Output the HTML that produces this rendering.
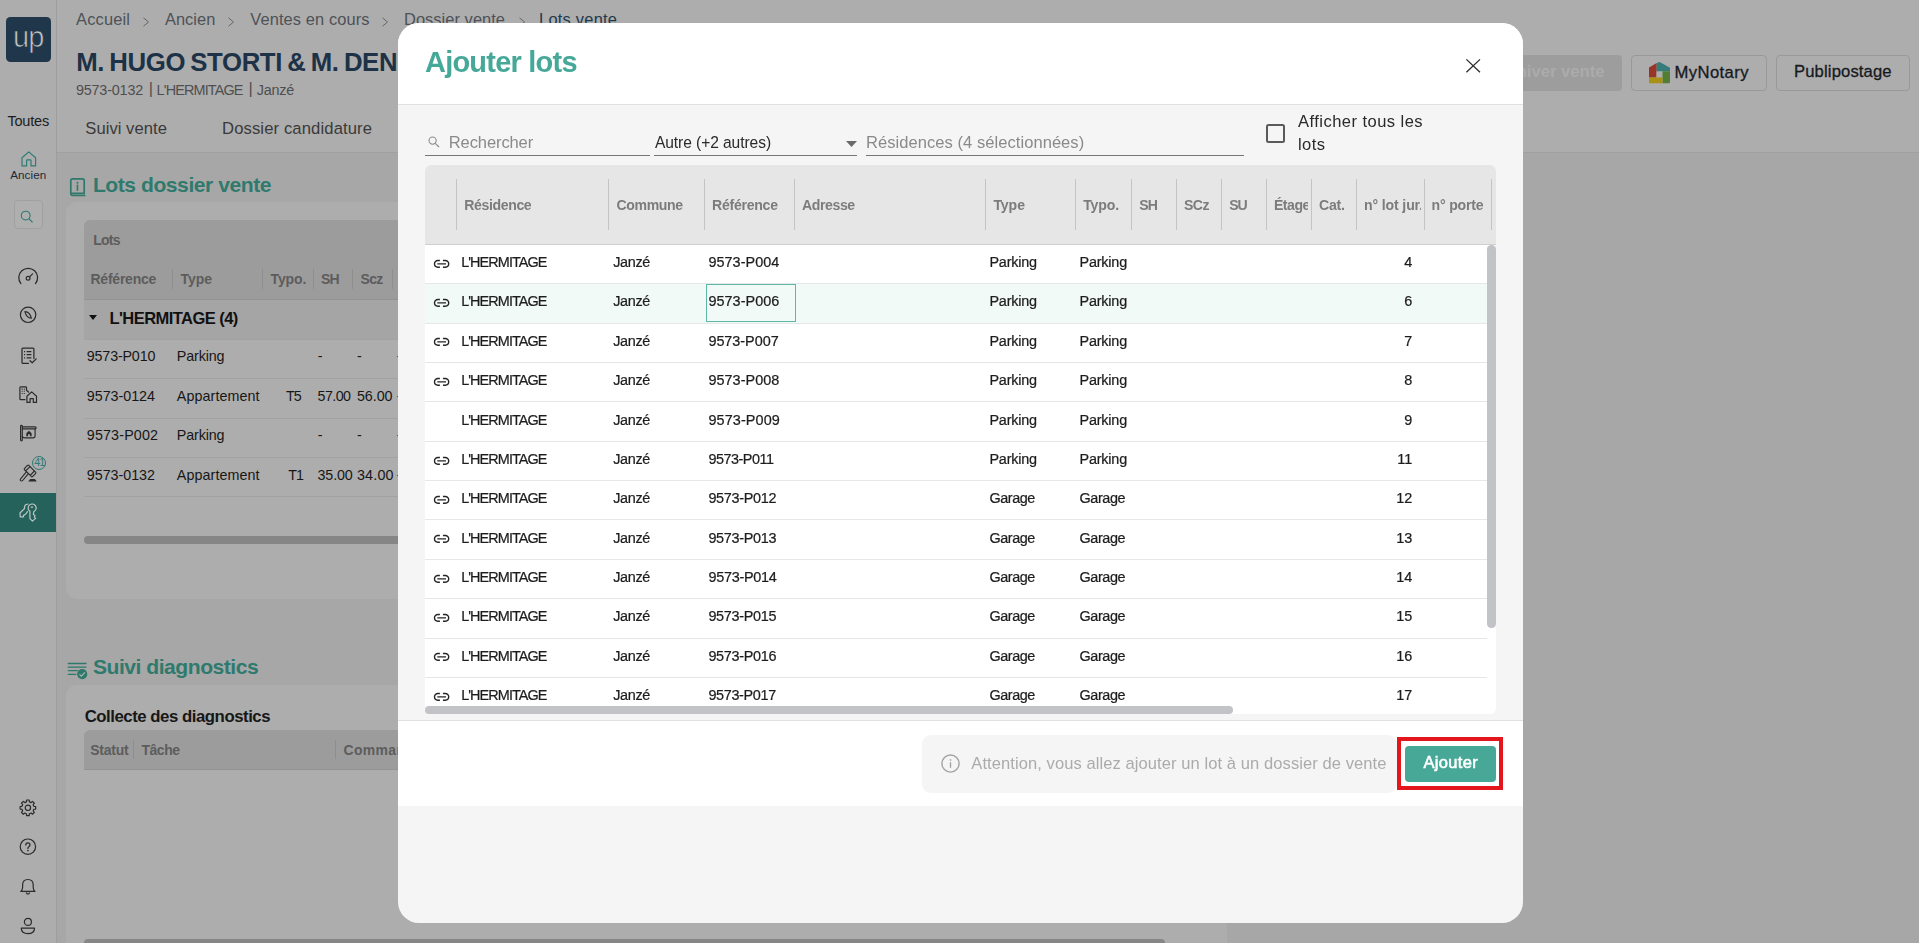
<!DOCTYPE html>
<html lang="fr"><head><meta charset="utf-8"><title>Ajouter lots</title>
<style>
html,body{margin:0;padding:0}
body{width:1919px;height:943px;overflow:hidden;position:relative;background:#a7a7a7;font-family:"Liberation Sans", sans-serif;}
.b{position:absolute;box-sizing:border-box}
.t{position:absolute;white-space:nowrap;line-height:normal;font-family:"Liberation Sans", sans-serif;}
svg{position:absolute;overflow:visible}
</style></head>
<body>
<div class="b" style="left:57px;top:0px;width:1862px;height:152px;background:#adadad;"></div>
<div class="b" style="left:57px;top:152px;width:1862px;height:1px;background:#a0a0a0;"></div>
<div class="b" style="left:0px;top:0px;width:56px;height:943px;background:#adadad;"></div>
<div class="b" style="left:56px;top:0px;width:1px;height:943px;background:#9e9e9e;"></div>
<div class="b" style="left:6.2px;top:17px;width:44.7px;height:44.5px;background:#20374b;border-radius:4.5px;"></div>
<span class="t" style="font-size:29px;font-weight:400;color:#bfc3c6;letter-spacing:-1.000px;left:13.1px;top:20.90px;-webkit-text-stroke:0.7px #20374b;">up</span>
<span class="t" style="font-size:16.43px;font-weight:400;color:#4e5257;letter-spacing:0.174px;left:76px;top:10.00px;">Accueil</span>
<span class="t" style="font-size:16.43px;font-weight:400;color:#4e5257;letter-spacing:0.016px;left:165px;top:10.00px;">Ancien</span>
<span class="t" style="font-size:16.43px;font-weight:400;color:#4e5257;letter-spacing:0.101px;left:250.3px;top:10.00px;">Ventes en cours</span>
<span class="t" style="font-size:16.43px;font-weight:400;color:#4e5257;letter-spacing:0.049px;left:404px;top:10.00px;">Dossier vente</span>
<span class="t" style="font-size:16.43px;font-weight:400;color:#22384c;letter-spacing:0.247px;left:539px;top:10.00px;">Lots vente</span>
<svg style="left:141.5px;top:16.5px" width="8" height="10" viewBox="0 0 8 10"><path d="M1.5 0.8 L6.5 5 L1.5 9.2" fill="none" stroke="#62676c" stroke-width="1"/></svg>
<svg style="left:227px;top:16.5px" width="8" height="10" viewBox="0 0 8 10"><path d="M1.5 0.8 L6.5 5 L1.5 9.2" fill="none" stroke="#62676c" stroke-width="1"/></svg>
<svg style="left:381px;top:16.5px" width="8" height="10" viewBox="0 0 8 10"><path d="M1.5 0.8 L6.5 5 L1.5 9.2" fill="none" stroke="#62676c" stroke-width="1"/></svg>
<svg style="left:517.5px;top:16.5px" width="8" height="10" viewBox="0 0 8 10"><path d="M1.5 0.8 L6.5 5 L1.5 9.2" fill="none" stroke="#62676c" stroke-width="1"/></svg>
<span class="t" style="font-size:25.76px;font-weight:700;color:#1d3246;letter-spacing:-0.379px;left:76.2px;top:47.60px;word-spacing:-1.5px;">M. HUGO STORTI &amp; M. DENIS</span>
<span class="t" style="font-size:14.42px;font-weight:400;color:#4f4f4f;letter-spacing:-0.188px;left:75.9px;top:82.00px;">9573-0132</span>
<span class="t" style="font-size:16.43px;font-weight:400;color:#4f4f4f;left:148.8px;top:79.20px;">|</span>
<span class="t" style="font-size:14.42px;font-weight:400;color:#4f4f4f;letter-spacing:-0.854px;left:156.6px;top:82.00px;">L&#x27;HERMITAGE</span>
<span class="t" style="font-size:16.43px;font-weight:400;color:#4f4f4f;left:248.4px;top:79.20px;">|</span>
<span class="t" style="font-size:14.42px;font-weight:400;color:#4f4f4f;letter-spacing:-0.238px;left:256.7px;top:82.00px;">Janzé</span>
<span class="t" style="font-size:16.64px;font-weight:400;color:#3a3a3a;letter-spacing:0.027px;left:85.3px;top:119.00px;">Suivi vente</span>
<span class="t" style="font-size:16.64px;font-weight:400;color:#3a3a3a;letter-spacing:0.119px;left:222px;top:119.00px;">Dossier candidature</span>
<div class="b" style="left:1500px;top:55px;width:122px;height:35.5px;background:#9d9d9d;border-radius:4px;"></div>
<span class="t" style="font-size:16.64px;font-weight:700;color:#ababab;right:314.50px;top:62.00px;">Archiver vente</span>
<div class="b" style="left:1631px;top:55px;width:136px;height:35.5px;border:1px solid #999;border-radius:4px;"></div>
<span class="t" style="font-size:16.64px;font-weight:400;color:#161a1f;letter-spacing:0.408px;left:1674.5px;top:63.00px;-webkit-text-stroke:0.3px #161a1f;">MyNotary</span>
<div class="b" style="left:1776px;top:55px;width:134px;height:35.5px;border:1px solid #999;border-radius:4px;"></div>
<span class="t" style="font-size:16.64px;font-weight:400;color:#161a1f;letter-spacing:0.133px;left:1794px;top:62.30px;-webkit-text-stroke:0.3px #161a1f;">Publipostage</span>
<svg style="left:1649px;top:61.8px" width="21" height="21.2" viewBox="0 0 21 21.2">
<path d="M0 5.6 L7.7 1.1 L7.7 9.2 L7.3 9.2 L7.3 15.4 L0 15.4 Z" fill="#983528"/>
<path d="M7.7 1.1 L9.9 0.15 Q10.5 -0.1 11.1 0.2 L21 5.7 L21 9.2 L7.7 9.2 Z" fill="#367c7b"/>
<path d="M13.5 9.2 L21 9.2 L21 19.9 Q21 21.2 19.7 21.2 L13.5 21.2 Z" fill="#527e34"/>
<path d="M0 15.4 L13.5 15.4 L13.5 21.2 L1.3 21.2 Q0 21.2 0 19.9 Z" fill="#a89116"/>
</svg>
<span class="t" style="font-size:14.52px;font-weight:400;color:#1c1c1c;letter-spacing:-0.196px;left:7.4px;top:113.20px;">Toutes</span>
<span class="t" style="font-size:11.66px;font-weight:400;color:#1c2a38;letter-spacing:0.072px;left:10.2px;top:168.00px;">Ancien</span>
<div class="b" style="left:14px;top:200px;width:29px;height:28.5px;background:#afafaf;border:1px solid #a0a0a0;border-radius:4px;"></div>
<div class="b" style="left:0px;top:493.4px;width:56px;height:38.4px;background:#25625c;"></div>
<span class="t" style="font-size:21.09px;font-weight:700;color:#2f7a6d;letter-spacing:-0.450px;left:92.9px;top:172.90px;">Lots dossier vente</span>
<div class="b" style="left:66px;top:202px;width:1160.5px;height:396.5px;background:#adadad;border-radius:11px;"></div>
<div class="b" style="left:84px;top:219.5px;width:1125px;height:80px;background:#9c9c9c;border-radius:6px 6px 0 0;"></div>
<div class="b" style="left:84px;top:299.3px;width:1125px;height:1px;background:#939393;"></div>
<div class="b" style="left:84px;top:300.3px;width:1125px;height:38.7px;background:#a5a5a5;"></div>
<span class="t" style="font-size:13.99px;font-weight:700;color:#5c5c5c;letter-spacing:-0.777px;left:93.3px;top:231.90px;">Lots</span>
<span class="t" style="font-size:13.99px;font-weight:700;color:#5c5c5c;letter-spacing:-0.230px;left:90.5px;top:270.90px;">Référence</span>
<span class="t" style="font-size:13.99px;font-weight:700;color:#5c5c5c;letter-spacing:-0.036px;left:180.5px;top:270.90px;">Type</span>
<span class="t" style="font-size:13.99px;font-weight:700;color:#5c5c5c;letter-spacing:-0.116px;left:270.5px;top:270.90px;">Typo.</span>
<span class="t" style="font-size:13.99px;font-weight:700;color:#5c5c5c;letter-spacing:-1.000px;left:321.1px;top:270.90px;">SH</span>
<span class="t" style="font-size:13.99px;font-weight:700;color:#5c5c5c;letter-spacing:-0.655px;left:360.5px;top:270.90px;">Scz</span>
<div class="b" style="left:172.0px;top:269.2px;width:1px;height:19.5px;background:#8e8e8e;"></div>
<div class="b" style="left:262.0px;top:269.2px;width:1px;height:19.5px;background:#8e8e8e;"></div>
<div class="b" style="left:313.2px;top:269.2px;width:1px;height:19.5px;background:#8e8e8e;"></div>
<div class="b" style="left:352.0px;top:269.2px;width:1px;height:19.5px;background:#8e8e8e;"></div>
<div class="b" style="left:392.1px;top:269.2px;width:1px;height:19.5px;background:#8e8e8e;"></div>
<svg style="left:89px;top:315.2px" width="8" height="5" viewBox="0 0 8 5"><path d="M0 0 L8 0 L4 5 Z" fill="#111"/></svg>
<span class="t" style="font-size:16.54px;font-weight:700;color:#111;letter-spacing:-0.557px;left:109.4px;top:308.80px;">L&#x27;HERMITAGE (4)</span>
<span class="t" style="font-size:14.31px;font-weight:400;color:#171717;letter-spacing:-0.171px;left:86.8px;top:348.00px;">9573-P010</span>
<span class="t" style="font-size:14.31px;font-weight:400;color:#171717;letter-spacing:-0.131px;left:176.8px;top:348.00px;">Parking</span>
<span class="t" style="font-size:14.31px;font-weight:400;color:#171717;left:317.8px;top:348.00px;">-</span>
<span class="t" style="font-size:14.31px;font-weight:400;color:#171717;left:357px;top:348.00px;">-</span>
<span class="t" style="font-size:14.31px;font-weight:400;color:#171717;left:396.8px;top:348.00px;">-</span>
<div class="b" style="left:84px;top:339.0px;width:1125px;height:1px;background:#a2a2a2;"></div>
<span class="t" style="font-size:14.31px;font-weight:400;color:#171717;letter-spacing:-0.022px;left:86.8px;top:388.00px;">9573-0124</span>
<span class="t" style="font-size:14.31px;font-weight:400;color:#171717;letter-spacing:0.094px;left:176.8px;top:388.00px;">Appartement</span>
<span class="t" style="font-size:14.31px;font-weight:400;color:#171717;letter-spacing:-1.000px;left:286px;top:388.00px;">T5</span>
<span class="t" style="font-size:14.31px;font-weight:400;color:#171717;letter-spacing:-0.570px;left:317.5px;top:388.00px;">57.00</span>
<span class="t" style="font-size:14.31px;font-weight:400;color:#171717;letter-spacing:-0.045px;left:356.9px;top:388.00px;">56.00</span>
<span class="t" style="font-size:14.31px;font-weight:400;color:#171717;left:396.8px;top:388.00px;">-</span>
<div class="b" style="left:84px;top:378.37px;width:1125px;height:1px;background:#a2a2a2;"></div>
<span class="t" style="font-size:14.31px;font-weight:400;color:#171717;letter-spacing:0.154px;left:86.8px;top:427.00px;">9573-P002</span>
<span class="t" style="font-size:14.31px;font-weight:400;color:#171717;letter-spacing:-0.131px;left:176.8px;top:427.00px;">Parking</span>
<span class="t" style="font-size:14.31px;font-weight:400;color:#171717;left:317.8px;top:427.00px;">-</span>
<span class="t" style="font-size:14.31px;font-weight:400;color:#171717;left:357px;top:427.00px;">-</span>
<span class="t" style="font-size:14.31px;font-weight:400;color:#171717;left:396.8px;top:427.00px;">-</span>
<div class="b" style="left:84px;top:417.74px;width:1125px;height:1px;background:#a2a2a2;"></div>
<span class="t" style="font-size:14.31px;font-weight:400;color:#171717;letter-spacing:-0.022px;left:86.8px;top:467.00px;">9573-0132</span>
<span class="t" style="font-size:14.31px;font-weight:400;color:#171717;letter-spacing:0.094px;left:176.8px;top:467.00px;">Appartement</span>
<span class="t" style="font-size:14.31px;font-weight:400;color:#171717;letter-spacing:-1.000px;left:288.3px;top:467.00px;">T1</span>
<span class="t" style="font-size:14.31px;font-weight:400;color:#171717;letter-spacing:-0.120px;left:317.5px;top:467.00px;">35.00</span>
<span class="t" style="font-size:14.31px;font-weight:400;color:#171717;letter-spacing:0.205px;left:356.9px;top:467.00px;">34.00</span>
<span class="t" style="font-size:14.31px;font-weight:400;color:#171717;left:396.8px;top:467.00px;">-</span>
<div class="b" style="left:84px;top:457.11px;width:1125px;height:1px;background:#a2a2a2;"></div>
<div class="b" style="left:84px;top:496.48px;width:1125px;height:1px;background:#a2a2a2;"></div>
<div class="b" style="left:84px;top:536.4px;width:1000px;height:8px;background:#868686;border-radius:4px;"></div>
<span class="t" style="font-size:21.09px;font-weight:700;color:#2f7a6d;letter-spacing:-0.472px;left:92.9px;top:655.00px;">Suivi diagnostics</span>
<div class="b" style="left:66px;top:684.7px;width:1160.5px;height:300px;background:#adadad;border-radius:11px;"></div>
<span class="t" style="font-size:16.75px;font-weight:700;color:#171717;letter-spacing:-0.461px;left:84.7px;top:707.20px;">Collecte des diagnostics</span>
<div class="b" style="left:84px;top:729.8px;width:1125px;height:39.2px;background:#9c9c9c;border-radius:6px 6px 0 0;"></div>
<div class="b" style="left:84px;top:768.5px;width:1125px;height:1px;background:#939393;"></div>
<span class="t" style="font-size:13.99px;font-weight:700;color:#5c5c5c;letter-spacing:-0.225px;left:90.2px;top:742.40px;">Statut</span>
<span class="t" style="font-size:13.99px;font-weight:700;color:#5c5c5c;letter-spacing:-0.480px;left:141.5px;top:742.40px;">Tâche</span>
<span class="t" style="font-size:13.99px;font-weight:700;color:#5c5c5c;left:343.6px;top:742.40px;letter-spacing:0.3px;">Commande</span>
<div class="b" style="left:133.0px;top:740px;width:1px;height:18.5px;background:#8e8e8e;"></div>
<div class="b" style="left:334.8px;top:740px;width:1px;height:18.5px;background:#8e8e8e;"></div>
<div class="b" style="left:84px;top:938.7px;width:1081px;height:8px;background:#868686;border-radius:4px;"></div>
<svg style="left:21px;top:150.5px" width="16" height="16" viewBox="0 0 16 16"><path d="M1 6.7 L7.8 0.9 L14.6 6.7 L14.6 14.9 L10 14.9 L10 9.6 Q10 8.9 9.3 8.9 L6.3 8.9 Q5.6 8.9 5.6 9.6 L5.6 14.9 L1 14.9 Z" fill="none" stroke="#2b7a74" stroke-width="1.15" stroke-linejoin="round"/></svg>
<svg style="left:20px;top:210px" width="14" height="14" viewBox="0 0 14 14"><circle cx="5.7" cy="5.6" r="4.4" fill="none" stroke="#2b7a74" stroke-width="1.1"/><path d="M9 8.9 L12.2 12" stroke="#2b7a74" stroke-width="1.1" stroke-linecap="round"/></svg>
<svg style="left:17px;top:266px" width="22" height="20" viewBox="0 0 22 20"><path d="M3.9 17.6 A9.4 9.4 0 1 1 18.5 17.6" fill="none" stroke="#2b2b2b" stroke-width="1.25" stroke-linecap="round"/><circle cx="11.1" cy="12.3" r="1.9" fill="none" stroke="#2b2b2b" stroke-width="1.2"/><path d="M12.5 10.9 L15.6 7.9" stroke="#2b2b2b" stroke-width="1.25" stroke-linecap="round"/></svg>
<svg style="left:19px;top:306px" width="18" height="18" viewBox="0 0 18 18"><circle cx="9.1" cy="8.8" r="7.7" fill="none" stroke="#2b2b2b" stroke-width="1.2"/><path d="M5.9 5.6 Q10.5 5.4 12.4 12.1 Q7.6 12.2 5.9 5.6 Z" fill="none" stroke="#2b2b2b" stroke-width="1.1" stroke-linejoin="round"/></svg>
<svg style="left:21px;top:346.5px" width="17" height="18" viewBox="0 0 17 18"><path d="M12.9 11.5 L12.9 1.9 Q12.9 1 12 1 L1.9 1 Q1 1 1 1.9 L1 15.4 Q1 16.3 1.9 16.3 L7.5 16.3" fill="none" stroke="#2b2b2b" stroke-width="1.25" stroke-linecap="round"/><path d="M5.6 4.6 H10.4 M5.6 7.7 H10.4 M5.6 10.8 H10.4" stroke="#2b2b2b" stroke-width="1.2"/><path d="M3 4.6 H4.1 M3 7.7 H4.1 M3 10.8 H4.1" stroke="#2b2b2b" stroke-width="1.2"/><path d="M9 13.7 L11.2 15.8 L15.2 11.9" fill="none" stroke="#2b2b2b" stroke-width="1.25" stroke-linecap="round" stroke-linejoin="round"/></svg>
<svg style="left:19px;top:385.5px" width="19" height="18" viewBox="0 0 19 18"><path d="M6 13.6 L1.6 13.6 Q0.9 13.6 0.9 12.9 L0.9 1.6 Q0.9 0.9 1.6 0.9 L6.8 0.9 Q7.5 0.9 7.5 1.6 L7.5 4.2 L9.6 6" fill="none" stroke="#2b2b2b" stroke-width="1.2" stroke-linecap="round" stroke-linejoin="round"/><path d="M2.7 3.1 h1 M4.8 3.1 h1 M2.7 5.3 h1 M4.8 5.3 h1 M2.7 7.5 h1 M4.8 7.5 h1" stroke="#2b2b2b" stroke-width="1.1"/><path d="M7.9 16.4 L7.9 10.2 L12.7 5.9 L17.5 10.2 L17.5 16.4 L14.3 16.4 L14.3 12.6 L11.1 12.6 L11.1 16.4 Z" fill="none" stroke="#2b2b2b" stroke-width="1.2" stroke-linejoin="round"/></svg>
<svg style="left:19px;top:424px" width="19" height="19" viewBox="0 0 19 19"><g fill="none" stroke="#2b2b2b" stroke-width="1.15" stroke-linejoin="round" stroke-linecap="round"><rect x="1.6" y="1.4" width="1.7" height="15.5" rx="0.85"/><path d="M3.3 2.9 H16.3 Q17.1 2.9 17.1 3.85 Q17.1 4.8 16.3 4.8 H3.3"/><path d="M16.1 4.8 V11.7 Q16.1 13.9 13.9 13.9 H5.8 Q3.9 13.9 3.4 12.4"/></g><path d="M7.3 12.3 V9.2 L9.95 6.8 L12.6 9.2 V12.3 H10.9 V10.3 H9 V12.3 Z" fill="#2b2b2b"/></svg>
<svg style="left:19px;top:464px" width="19" height="19" viewBox="0 0 19 19"><g fill="#adadad" stroke="#2b2b2b" stroke-width="1.15" stroke-linejoin="round"><rect x="-0.3" y="10.95" width="11.4" height="2.7" rx="1.35" transform="rotate(-50 5.4 12.3)"/><g transform="rotate(45 11.07 6.96)"><rect x="5.3" y="3.9" width="11.5" height="6.1" rx="1"/><path d="M7.9 3.9 V10 M14.2 3.9 V10" fill="none"/></g></g><path d="M11.3 15 L15.8 15 L17.8 17.6 L9.2 17.6 Z" fill="#2b2b2b"/></svg>
<div class="b" style="left:31.8px;top:455.6px;width:14.4px;height:14.4px;border:1.1px solid #2b7a74;border-radius:50%;background:#adadad;"></div>
<span class="t" style="font-size:10.81px;font-weight:400;color:#2b7a74;letter-spacing:-1.000px;left:34.2px;top:456.30px;">41</span>
<svg style="left:19px;top:503px" width="19" height="20" viewBox="0 0 19 20"><g fill="none" stroke="#bcc4c2" stroke-width="1.2" stroke-linejoin="round" stroke-linecap="round"><path d="M9 1 Q5.6 1.4 5.5 4 L5.5 5.5 L1 10 L1.2 13.8 L4.5 13.8 L4.5 12.3 L6 11.6 L7.2 10.5 L8.4 8.6"/><path d="M10.9 8.3 A4 4 0 1 1 14.7 8.7 L14.4 11.6 L16 12.5 L15.4 14.1 L16.6 15.4 L13.45 18.1 L10.9 15.6 Z"/><path d="M12.3 4.2 H13.6"/></g></svg>
<svg style="left:19px;top:799px" width="18" height="18" viewBox="0 0 18 18"><path d="M7.60 1.01 L10.20 1.01 L10.37 2.88 L12.05 3.57 L13.49 2.37 L15.33 4.21 L14.13 5.65 L14.82 7.33 L16.69 7.50 L16.69 10.10 L14.82 10.27 L14.13 11.95 L15.33 13.39 L13.49 15.23 L12.05 14.03 L10.37 14.72 L10.20 16.59 L7.60 16.59 L7.43 14.72 L5.75 14.03 L4.31 15.23 L2.47 13.39 L3.67 11.95 L2.98 10.27 L1.11 10.10 L1.11 7.50 L2.98 7.33 L3.67 5.65 L2.47 4.21 L4.31 2.37 L5.75 3.57 L7.43 2.88 Z" fill="none" stroke="#2b2b2b" stroke-width="1.2" stroke-linejoin="round"/><circle cx="8.9" cy="8.8" r="2.7" fill="none" stroke="#2b2b2b" stroke-width="1.2"/></svg>
<svg style="left:19px;top:838px" width="18" height="18" viewBox="0 0 18 18"><circle cx="8.9" cy="8.7" r="7.7" fill="none" stroke="#2b2b2b" stroke-width="1.2"/><path d="M6.8 7.0 Q6.9 4.9 8.9 4.9 Q11 4.9 11 6.8 Q11 8 9.8 8.7 Q8.9 9.3 8.9 10.4" fill="none" stroke="#2b2b2b" stroke-width="1.25" stroke-linecap="round"/><circle cx="8.9" cy="12.5" r="0.85" fill="#2b2b2b"/></svg>
<svg style="left:19px;top:877.5px" width="18" height="18" viewBox="0 0 18 18"><path d="M1.8 13.4 Q3.6 12 3.6 9.6 L3.6 7.1 Q3.6 1.5 8.9 1.5 Q14.2 1.5 14.2 7.1 L14.2 9.6 Q14.2 12 16 13.4 Z" fill="none" stroke="#2b2b2b" stroke-width="1.2" stroke-linejoin="round"/><path d="M7.3 14.9 Q8.9 17.2 10.5 14.9" fill="none" stroke="#2b2b2b" stroke-width="1.2" stroke-linecap="round"/></svg>
<svg style="left:19px;top:916px" width="18" height="19" viewBox="0 0 18 19"><circle cx="8.9" cy="5.9" r="3.5" fill="none" stroke="#2b2b2b" stroke-width="1.2"/><path d="M2.3 12.2 L15.5 12.2 Q15.5 17.6 8.9 17.6 Q2.3 17.6 2.3 12.2 Z" fill="none" stroke="#2b2b2b" stroke-width="1.2" stroke-linejoin="round"/></svg>
<svg style="left:69px;top:177px" width="18" height="20" viewBox="0 0 18 20"><path d="M15.2 16.4 L15.2 3.6 Q15.2 1.8 13.4 1.8 L3.6 1.8 Q1.8 1.8 1.8 3.6 L1.8 16.6 Q1.8 18.5 3.8 18.5 L15.8 18.5 M1.9 16.4 L15.2 16.4" fill="none" stroke="#2f786b" stroke-width="1.7" stroke-linejoin="round" stroke-linecap="round"/><circle cx="8.45" cy="5.7" r="1.05" fill="#2f786b"/><path d="M8.45 8.3 V13.2" stroke="#2f786b" stroke-width="1.6" stroke-linecap="round"/></svg>
<svg style="left:67px;top:661px" width="22" height="20" viewBox="0 0 22 20"><path d="M1.3 2.5 H19 M1.3 6.2 H19 M1.3 9.6 H10.4 M1.3 13.4 H8.8" stroke="#2f786b" stroke-width="1.3" stroke-linecap="round"/><circle cx="15.2" cy="13.1" r="5.1" fill="#2f786b"/><path d="M12.5 13.3 L14.4 15.2 L17.9 11.4" fill="none" stroke="#a4b8b3" stroke-width="1.2"/></svg>
<div class="b" style="left:0;top:0;width:1919px;height:943px;will-change:transform;">
<div class="b" style="left:398px;top:23px;width:1125px;height:900px;background:#f5f5f5;border-radius:21px;overflow:hidden;"><div class="b" style="left:0;top:0;width:1125px;height:82px;background:#fff;border-bottom:1px solid #e0e0e0;"></div><div class="b" style="left:0;top:697px;width:1125px;height:85.5px;background:#fff;border-top:1px solid #e0e0e0;"></div></div>
<span class="t" style="font-size:28.94px;font-weight:700;color:#45a898;letter-spacing:-0.753px;left:425px;top:46.10px;">Ajouter lots</span>
<svg style="left:1466px;top:59.3px" width="14.4" height="13.6" viewBox="0 0 14.4 13.6"><path d="M0.4 0.4 L14 13.2 M14 0.4 L0.4 13.2" stroke="#2a2a2a" stroke-width="1.3" fill="none"/></svg>
<div class="b" style="left:425px;top:155px;width:224.5px;height:1px;background:#757575;"></div>
<div class="b" style="left:654px;top:155px;width:203px;height:1px;background:#757575;"></div>
<div class="b" style="left:866px;top:155px;width:378px;height:1px;background:#757575;"></div>
<svg style="left:428px;top:135.5px" width="12" height="12" viewBox="0 0 12 12"><circle cx="4.6" cy="4.6" r="3.6" fill="none" stroke="#8c8c8c" stroke-width="1.1"/><path d="M7.3 7.3 L11 11" stroke="#8c8c8c" stroke-width="1.2"/></svg>
<span class="t" style="font-size:16.54px;font-weight:400;color:#8a8a8a;letter-spacing:-0.117px;left:448.8px;top:133.20px;">Rechercher</span>
<span class="t" style="font-size:15.58px;font-weight:400;color:#2a2a2a;letter-spacing:-0.071px;left:654.9px;top:133.50px;">Autre (+2 autres)</span>
<svg style="left:845.5px;top:140.5px" width="11" height="6" viewBox="0 0 11 6"><path d="M0 0 L11 0 L5.5 6 Z" fill="#6a6a6a"/></svg>
<span class="t" style="font-size:16.54px;font-weight:400;color:#8a8a8a;letter-spacing:0.049px;left:866px;top:133.20px;">Résidences (4 sélectionnées)</span>
<div class="b" style="left:1265.6px;top:124.2px;width:19px;height:19px;border:2px solid #5a5a5a;border-radius:2.5px;"></div>
<span class="t" style="font-size:16.54px;font-weight:400;color:#2a2a2a;letter-spacing:0.455px;left:1298px;top:112.20px;">Afficher tous les</span>
<span class="t" style="font-size:16.54px;font-weight:400;color:#2a2a2a;letter-spacing:0.422px;left:1298px;top:135.00px;">lots</span>
<div class="b" style="left:425px;top:165px;width:1071px;height:549px;background:#fff;border-radius:6px;"></div>
<div class="b" style="left:425px;top:165px;width:1071px;height:79.3px;background:#e6e6e6;border-radius:6px 6px 0 0;"></div>
<div class="b" style="left:425px;top:244px;width:1071px;height:1px;background:#cfcfcf;"></div>
<div class="b" style="left:455.9px;top:179.3px;width:1px;height:50.3px;background:#c4c4c4;"></div>
<div class="b" style="left:608.1px;top:179.3px;width:1px;height:50.3px;background:#c4c4c4;"></div>
<div class="b" style="left:704.0px;top:179.3px;width:1px;height:50.3px;background:#c4c4c4;"></div>
<div class="b" style="left:793.9px;top:179.3px;width:1px;height:50.3px;background:#c4c4c4;"></div>
<div class="b" style="left:984.8px;top:179.3px;width:1px;height:50.3px;background:#c4c4c4;"></div>
<div class="b" style="left:1075.0px;top:179.3px;width:1px;height:50.3px;background:#c4c4c4;"></div>
<div class="b" style="left:1130.8px;top:179.3px;width:1px;height:50.3px;background:#c4c4c4;"></div>
<div class="b" style="left:1175.9px;top:179.3px;width:1px;height:50.3px;background:#c4c4c4;"></div>
<div class="b" style="left:1221.0px;top:179.3px;width:1px;height:50.3px;background:#c4c4c4;"></div>
<div class="b" style="left:1266.1px;top:179.3px;width:1px;height:50.3px;background:#c4c4c4;"></div>
<div class="b" style="left:1310.8px;top:179.3px;width:1px;height:50.3px;background:#c4c4c4;"></div>
<div class="b" style="left:1355.9px;top:179.3px;width:1px;height:50.3px;background:#c4c4c4;"></div>
<div class="b" style="left:1424.1px;top:179.3px;width:1px;height:50.3px;background:#c4c4c4;"></div>
<div class="b" style="left:1490.9px;top:179.3px;width:1px;height:50.3px;background:#c4c4c4;"></div>
<span class="t" style="font-size:14.1px;font-weight:700;color:#7c7c7c;letter-spacing:-0.389px;left:464.3px;top:197.00px;">Résidence</span>
<span class="t" style="font-size:14.1px;font-weight:700;color:#7c7c7c;letter-spacing:-0.387px;left:616.5px;top:197.00px;">Commune</span>
<span class="t" style="font-size:14.1px;font-weight:700;color:#7c7c7c;letter-spacing:-0.271px;left:712px;top:197.00px;">Référence</span>
<span class="t" style="font-size:14.1px;font-weight:700;color:#7c7c7c;letter-spacing:-0.404px;left:802px;top:197.00px;">Adresse</span>
<span class="t" style="font-size:14.1px;font-weight:700;color:#7c7c7c;letter-spacing:-0.086px;left:993.4px;top:197.00px;">Type</span>
<span class="t" style="font-size:14.1px;font-weight:700;color:#7c7c7c;letter-spacing:-0.137px;left:1083.2px;top:197.00px;">Typo.</span>
<span class="t" style="font-size:14.1px;font-weight:700;color:#7c7c7c;letter-spacing:-1.000px;left:1139.3px;top:197.00px;">SH</span>
<span class="t" style="font-size:14.1px;font-weight:700;color:#7c7c7c;letter-spacing:-0.570px;left:1184px;top:197.00px;">SCz</span>
<span class="t" style="font-size:14.1px;font-weight:700;color:#7c7c7c;letter-spacing:-1.000px;left:1229.2px;top:197.00px;">SU</span>
<span class="t" style="font-size:14.1px;font-weight:700;color:#7c7c7c;letter-spacing:-0.473px;left:1273.9px;top:197.00px;width:34.3px;overflow:hidden;">Étage</span>
<span class="t" style="font-size:14.1px;font-weight:700;color:#7c7c7c;letter-spacing:-0.214px;left:1319px;top:197.00px;">Cat.</span>
<span class="t" style="font-size:14.1px;font-weight:700;color:#7c7c7c;letter-spacing:-0.145px;left:1364.1px;top:197.00px;width:56.5px;overflow:hidden;">n° lot jur.</span>
<span class="t" style="font-size:14.1px;font-weight:700;color:#7c7c7c;letter-spacing:-0.187px;left:1431.6px;top:197.00px;">n° porte</span>
<div class="b" style="left:425px;top:283.6px;width:1062px;height:39.1px;background:#f2faf8;"></div>
<div class="b" style="left:706px;top:284px;width:90px;height:38px;border:1px solid #5fb8a7;"></div>
<div class="b" style="left:425px;top:283.27px;width:1062px;height:1px;background:#e7e7e7;"></div>
<svg style="left:433px;top:258.71px" width="18" height="10" viewBox="0 0 18 10"><path d="M6.9 1.45 H4.9 A3.4 3.4 0 0 0 4.9 8.25 H6.9 M9.96 1.45 H12.3 A3.4 3.4 0 0 1 12.3 8.25 H9.96 M4.3 4.85 H13" fill="none" stroke="#252525" stroke-width="1.4"/></svg>
<span class="t" style="font-size:14.42px;font-weight:400;color:#1d1d1d;letter-spacing:-0.914px;left:461.2px;top:254.10px;-webkit-text-stroke:0.22px #1d1d1d;">L&#x27;HERMITAGE</span>
<span class="t" style="font-size:14.42px;font-weight:400;color:#1d1d1d;letter-spacing:-0.313px;left:613.2px;top:254.10px;-webkit-text-stroke:0.22px #1d1d1d;">Janzé</span>
<span class="t" style="font-size:14.42px;font-weight:400;color:#1d1d1d;letter-spacing:0.062px;left:708.4px;top:254.10px;-webkit-text-stroke:0.22px #1d1d1d;">9573-P004</span>
<span class="t" style="font-size:14.42px;font-weight:400;color:#1d1d1d;letter-spacing:-0.193px;left:989.4px;top:254.10px;-webkit-text-stroke:0.22px #1d1d1d;">Parking</span>
<span class="t" style="font-size:14.42px;font-weight:400;color:#1d1d1d;letter-spacing:-0.193px;left:1079.5px;top:254.10px;-webkit-text-stroke:0.22px #1d1d1d;">Parking</span>
<span class="t" style="font-size:14.42px;font-weight:400;color:#1d1d1d;right:506.80px;top:254.10px;-webkit-text-stroke:0.22px #1d1d1d;">4</span>
<div class="b" style="left:425px;top:322.64px;width:1062px;height:1px;background:#e7e7e7;"></div>
<svg style="left:433px;top:298.08px" width="18" height="10" viewBox="0 0 18 10"><path d="M6.9 1.45 H4.9 A3.4 3.4 0 0 0 4.9 8.25 H6.9 M9.96 1.45 H12.3 A3.4 3.4 0 0 1 12.3 8.25 H9.96 M4.3 4.85 H13" fill="none" stroke="#252525" stroke-width="1.4"/></svg>
<span class="t" style="font-size:14.42px;font-weight:400;color:#1d1d1d;letter-spacing:-0.914px;left:461.2px;top:293.47px;-webkit-text-stroke:0.22px #1d1d1d;">L&#x27;HERMITAGE</span>
<span class="t" style="font-size:14.42px;font-weight:400;color:#1d1d1d;letter-spacing:-0.313px;left:613.2px;top:293.47px;-webkit-text-stroke:0.22px #1d1d1d;">Janzé</span>
<span class="t" style="font-size:14.42px;font-weight:400;color:#1d1d1d;letter-spacing:0.062px;left:708.4px;top:293.47px;-webkit-text-stroke:0.22px #1d1d1d;">9573-P006</span>
<span class="t" style="font-size:14.42px;font-weight:400;color:#1d1d1d;letter-spacing:-0.193px;left:989.4px;top:293.47px;-webkit-text-stroke:0.22px #1d1d1d;">Parking</span>
<span class="t" style="font-size:14.42px;font-weight:400;color:#1d1d1d;letter-spacing:-0.193px;left:1079.5px;top:293.47px;-webkit-text-stroke:0.22px #1d1d1d;">Parking</span>
<span class="t" style="font-size:14.42px;font-weight:400;color:#1d1d1d;right:506.80px;top:293.47px;-webkit-text-stroke:0.22px #1d1d1d;">6</span>
<div class="b" style="left:425px;top:362.01px;width:1062px;height:1px;background:#e7e7e7;"></div>
<svg style="left:433px;top:337.45px" width="18" height="10" viewBox="0 0 18 10"><path d="M6.9 1.45 H4.9 A3.4 3.4 0 0 0 4.9 8.25 H6.9 M9.96 1.45 H12.3 A3.4 3.4 0 0 1 12.3 8.25 H9.96 M4.3 4.85 H13" fill="none" stroke="#252525" stroke-width="1.4"/></svg>
<span class="t" style="font-size:14.42px;font-weight:400;color:#1d1d1d;letter-spacing:-0.914px;left:461.2px;top:332.84px;-webkit-text-stroke:0.22px #1d1d1d;">L&#x27;HERMITAGE</span>
<span class="t" style="font-size:14.42px;font-weight:400;color:#1d1d1d;letter-spacing:-0.313px;left:613.2px;top:332.84px;-webkit-text-stroke:0.22px #1d1d1d;">Janzé</span>
<span class="t" style="font-size:14.42px;font-weight:400;color:#1d1d1d;letter-spacing:-0.025px;left:708.4px;top:332.84px;-webkit-text-stroke:0.22px #1d1d1d;">9573-P007</span>
<span class="t" style="font-size:14.42px;font-weight:400;color:#1d1d1d;letter-spacing:-0.193px;left:989.4px;top:332.84px;-webkit-text-stroke:0.22px #1d1d1d;">Parking</span>
<span class="t" style="font-size:14.42px;font-weight:400;color:#1d1d1d;letter-spacing:-0.193px;left:1079.5px;top:332.84px;-webkit-text-stroke:0.22px #1d1d1d;">Parking</span>
<span class="t" style="font-size:14.42px;font-weight:400;color:#1d1d1d;right:506.80px;top:332.84px;-webkit-text-stroke:0.22px #1d1d1d;">7</span>
<div class="b" style="left:425px;top:401.38px;width:1062px;height:1px;background:#e7e7e7;"></div>
<svg style="left:433px;top:376.82px" width="18" height="10" viewBox="0 0 18 10"><path d="M6.9 1.45 H4.9 A3.4 3.4 0 0 0 4.9 8.25 H6.9 M9.96 1.45 H12.3 A3.4 3.4 0 0 1 12.3 8.25 H9.96 M4.3 4.85 H13" fill="none" stroke="#252525" stroke-width="1.4"/></svg>
<span class="t" style="font-size:14.42px;font-weight:400;color:#1d1d1d;letter-spacing:-0.914px;left:461.2px;top:372.21px;-webkit-text-stroke:0.22px #1d1d1d;">L&#x27;HERMITAGE</span>
<span class="t" style="font-size:14.42px;font-weight:400;color:#1d1d1d;letter-spacing:-0.313px;left:613.2px;top:372.21px;-webkit-text-stroke:0.22px #1d1d1d;">Janzé</span>
<span class="t" style="font-size:14.42px;font-weight:400;color:#1d1d1d;letter-spacing:0.062px;left:708.4px;top:372.21px;-webkit-text-stroke:0.22px #1d1d1d;">9573-P008</span>
<span class="t" style="font-size:14.42px;font-weight:400;color:#1d1d1d;letter-spacing:-0.193px;left:989.4px;top:372.21px;-webkit-text-stroke:0.22px #1d1d1d;">Parking</span>
<span class="t" style="font-size:14.42px;font-weight:400;color:#1d1d1d;letter-spacing:-0.193px;left:1079.5px;top:372.21px;-webkit-text-stroke:0.22px #1d1d1d;">Parking</span>
<span class="t" style="font-size:14.42px;font-weight:400;color:#1d1d1d;right:506.80px;top:372.21px;-webkit-text-stroke:0.22px #1d1d1d;">8</span>
<div class="b" style="left:425px;top:440.75px;width:1062px;height:1px;background:#e7e7e7;"></div>
<span class="t" style="font-size:14.42px;font-weight:400;color:#1d1d1d;letter-spacing:-0.914px;left:461.2px;top:411.58px;-webkit-text-stroke:0.22px #1d1d1d;">L&#x27;HERMITAGE</span>
<span class="t" style="font-size:14.42px;font-weight:400;color:#1d1d1d;letter-spacing:-0.313px;left:613.2px;top:411.58px;-webkit-text-stroke:0.22px #1d1d1d;">Janzé</span>
<span class="t" style="font-size:14.42px;font-weight:400;color:#1d1d1d;letter-spacing:0.113px;left:708.4px;top:411.58px;-webkit-text-stroke:0.22px #1d1d1d;">9573-P009</span>
<span class="t" style="font-size:14.42px;font-weight:400;color:#1d1d1d;letter-spacing:-0.193px;left:989.4px;top:411.58px;-webkit-text-stroke:0.22px #1d1d1d;">Parking</span>
<span class="t" style="font-size:14.42px;font-weight:400;color:#1d1d1d;letter-spacing:-0.193px;left:1079.5px;top:411.58px;-webkit-text-stroke:0.22px #1d1d1d;">Parking</span>
<span class="t" style="font-size:14.42px;font-weight:400;color:#1d1d1d;right:506.80px;top:411.58px;-webkit-text-stroke:0.22px #1d1d1d;">9</span>
<div class="b" style="left:425px;top:480.12px;width:1062px;height:1px;background:#e7e7e7;"></div>
<svg style="left:433px;top:455.56px" width="18" height="10" viewBox="0 0 18 10"><path d="M6.9 1.45 H4.9 A3.4 3.4 0 0 0 4.9 8.25 H6.9 M9.96 1.45 H12.3 A3.4 3.4 0 0 1 12.3 8.25 H9.96 M4.3 4.85 H13" fill="none" stroke="#252525" stroke-width="1.4"/></svg>
<span class="t" style="font-size:14.42px;font-weight:400;color:#1d1d1d;letter-spacing:-0.914px;left:461.2px;top:450.95px;-webkit-text-stroke:0.22px #1d1d1d;">L&#x27;HERMITAGE</span>
<span class="t" style="font-size:14.42px;font-weight:400;color:#1d1d1d;letter-spacing:-0.313px;left:613.2px;top:450.95px;-webkit-text-stroke:0.22px #1d1d1d;">Janzé</span>
<span class="t" style="font-size:14.42px;font-weight:400;color:#1d1d1d;letter-spacing:-0.478px;left:708.4px;top:450.95px;-webkit-text-stroke:0.22px #1d1d1d;">9573-P011</span>
<span class="t" style="font-size:14.42px;font-weight:400;color:#1d1d1d;letter-spacing:-0.193px;left:989.4px;top:450.95px;-webkit-text-stroke:0.22px #1d1d1d;">Parking</span>
<span class="t" style="font-size:14.42px;font-weight:400;color:#1d1d1d;letter-spacing:-0.193px;left:1079.5px;top:450.95px;-webkit-text-stroke:0.22px #1d1d1d;">Parking</span>
<span class="t" style="font-size:14.42px;font-weight:400;color:#1d1d1d;right:506.80px;top:450.95px;-webkit-text-stroke:0.22px #1d1d1d;">11</span>
<div class="b" style="left:425px;top:519.4899999999999px;width:1062px;height:1px;background:#e7e7e7;"></div>
<svg style="left:433px;top:494.93px" width="18" height="10" viewBox="0 0 18 10"><path d="M6.9 1.45 H4.9 A3.4 3.4 0 0 0 4.9 8.25 H6.9 M9.96 1.45 H12.3 A3.4 3.4 0 0 1 12.3 8.25 H9.96 M4.3 4.85 H13" fill="none" stroke="#252525" stroke-width="1.4"/></svg>
<span class="t" style="font-size:14.42px;font-weight:400;color:#1d1d1d;letter-spacing:-0.914px;left:461.2px;top:490.32px;-webkit-text-stroke:0.22px #1d1d1d;">L&#x27;HERMITAGE</span>
<span class="t" style="font-size:14.42px;font-weight:400;color:#1d1d1d;letter-spacing:-0.313px;left:613.2px;top:490.32px;-webkit-text-stroke:0.22px #1d1d1d;">Janzé</span>
<span class="t" style="font-size:14.42px;font-weight:400;color:#1d1d1d;letter-spacing:-0.300px;left:708.4px;top:490.32px;-webkit-text-stroke:0.22px #1d1d1d;">9573-P012</span>
<span class="t" style="font-size:14.42px;font-weight:400;color:#1d1d1d;letter-spacing:-0.412px;left:989.4px;top:490.32px;-webkit-text-stroke:0.22px #1d1d1d;">Garage</span>
<span class="t" style="font-size:14.42px;font-weight:400;color:#1d1d1d;letter-spacing:-0.412px;left:1079.5px;top:490.32px;-webkit-text-stroke:0.22px #1d1d1d;">Garage</span>
<span class="t" style="font-size:14.42px;font-weight:400;color:#1d1d1d;right:506.80px;top:490.32px;-webkit-text-stroke:0.22px #1d1d1d;">12</span>
<div class="b" style="left:425px;top:558.8599999999999px;width:1062px;height:1px;background:#e7e7e7;"></div>
<svg style="left:433px;top:534.30px" width="18" height="10" viewBox="0 0 18 10"><path d="M6.9 1.45 H4.9 A3.4 3.4 0 0 0 4.9 8.25 H6.9 M9.96 1.45 H12.3 A3.4 3.4 0 0 1 12.3 8.25 H9.96 M4.3 4.85 H13" fill="none" stroke="#252525" stroke-width="1.4"/></svg>
<span class="t" style="font-size:14.42px;font-weight:400;color:#1d1d1d;letter-spacing:-0.914px;left:461.2px;top:529.69px;-webkit-text-stroke:0.22px #1d1d1d;">L&#x27;HERMITAGE</span>
<span class="t" style="font-size:14.42px;font-weight:400;color:#1d1d1d;letter-spacing:-0.313px;left:613.2px;top:529.69px;-webkit-text-stroke:0.22px #1d1d1d;">Janzé</span>
<span class="t" style="font-size:14.42px;font-weight:400;color:#1d1d1d;letter-spacing:-0.300px;left:708.4px;top:529.69px;-webkit-text-stroke:0.22px #1d1d1d;">9573-P013</span>
<span class="t" style="font-size:14.42px;font-weight:400;color:#1d1d1d;letter-spacing:-0.412px;left:989.4px;top:529.69px;-webkit-text-stroke:0.22px #1d1d1d;">Garage</span>
<span class="t" style="font-size:14.42px;font-weight:400;color:#1d1d1d;letter-spacing:-0.412px;left:1079.5px;top:529.69px;-webkit-text-stroke:0.22px #1d1d1d;">Garage</span>
<span class="t" style="font-size:14.42px;font-weight:400;color:#1d1d1d;right:506.80px;top:529.69px;-webkit-text-stroke:0.22px #1d1d1d;">13</span>
<div class="b" style="left:425px;top:598.23px;width:1062px;height:1px;background:#e7e7e7;"></div>
<svg style="left:433px;top:573.67px" width="18" height="10" viewBox="0 0 18 10"><path d="M6.9 1.45 H4.9 A3.4 3.4 0 0 0 4.9 8.25 H6.9 M9.96 1.45 H12.3 A3.4 3.4 0 0 1 12.3 8.25 H9.96 M4.3 4.85 H13" fill="none" stroke="#252525" stroke-width="1.4"/></svg>
<span class="t" style="font-size:14.42px;font-weight:400;color:#1d1d1d;letter-spacing:-0.914px;left:461.2px;top:569.06px;-webkit-text-stroke:0.22px #1d1d1d;">L&#x27;HERMITAGE</span>
<span class="t" style="font-size:14.42px;font-weight:400;color:#1d1d1d;letter-spacing:-0.313px;left:613.2px;top:569.06px;-webkit-text-stroke:0.22px #1d1d1d;">Janzé</span>
<span class="t" style="font-size:14.42px;font-weight:400;color:#1d1d1d;letter-spacing:-0.250px;left:708.4px;top:569.06px;-webkit-text-stroke:0.22px #1d1d1d;">9573-P014</span>
<span class="t" style="font-size:14.42px;font-weight:400;color:#1d1d1d;letter-spacing:-0.412px;left:989.4px;top:569.06px;-webkit-text-stroke:0.22px #1d1d1d;">Garage</span>
<span class="t" style="font-size:14.42px;font-weight:400;color:#1d1d1d;letter-spacing:-0.412px;left:1079.5px;top:569.06px;-webkit-text-stroke:0.22px #1d1d1d;">Garage</span>
<span class="t" style="font-size:14.42px;font-weight:400;color:#1d1d1d;right:506.80px;top:569.06px;-webkit-text-stroke:0.22px #1d1d1d;">14</span>
<div class="b" style="left:425px;top:637.5999999999999px;width:1062px;height:1px;background:#e7e7e7;"></div>
<svg style="left:433px;top:613.04px" width="18" height="10" viewBox="0 0 18 10"><path d="M6.9 1.45 H4.9 A3.4 3.4 0 0 0 4.9 8.25 H6.9 M9.96 1.45 H12.3 A3.4 3.4 0 0 1 12.3 8.25 H9.96 M4.3 4.85 H13" fill="none" stroke="#252525" stroke-width="1.4"/></svg>
<span class="t" style="font-size:14.42px;font-weight:400;color:#1d1d1d;letter-spacing:-0.914px;left:461.2px;top:608.43px;-webkit-text-stroke:0.22px #1d1d1d;">L&#x27;HERMITAGE</span>
<span class="t" style="font-size:14.42px;font-weight:400;color:#1d1d1d;letter-spacing:-0.313px;left:613.2px;top:608.43px;-webkit-text-stroke:0.22px #1d1d1d;">Janzé</span>
<span class="t" style="font-size:14.42px;font-weight:400;color:#1d1d1d;letter-spacing:-0.300px;left:708.4px;top:608.43px;-webkit-text-stroke:0.22px #1d1d1d;">9573-P015</span>
<span class="t" style="font-size:14.42px;font-weight:400;color:#1d1d1d;letter-spacing:-0.412px;left:989.4px;top:608.43px;-webkit-text-stroke:0.22px #1d1d1d;">Garage</span>
<span class="t" style="font-size:14.42px;font-weight:400;color:#1d1d1d;letter-spacing:-0.412px;left:1079.5px;top:608.43px;-webkit-text-stroke:0.22px #1d1d1d;">Garage</span>
<span class="t" style="font-size:14.42px;font-weight:400;color:#1d1d1d;right:506.80px;top:608.43px;-webkit-text-stroke:0.22px #1d1d1d;">15</span>
<div class="b" style="left:425px;top:676.97px;width:1062px;height:1px;background:#e7e7e7;"></div>
<svg style="left:433px;top:652.41px" width="18" height="10" viewBox="0 0 18 10"><path d="M6.9 1.45 H4.9 A3.4 3.4 0 0 0 4.9 8.25 H6.9 M9.96 1.45 H12.3 A3.4 3.4 0 0 1 12.3 8.25 H9.96 M4.3 4.85 H13" fill="none" stroke="#252525" stroke-width="1.4"/></svg>
<span class="t" style="font-size:14.42px;font-weight:400;color:#1d1d1d;letter-spacing:-0.914px;left:461.2px;top:647.80px;-webkit-text-stroke:0.22px #1d1d1d;">L&#x27;HERMITAGE</span>
<span class="t" style="font-size:14.42px;font-weight:400;color:#1d1d1d;letter-spacing:-0.313px;left:613.2px;top:647.80px;-webkit-text-stroke:0.22px #1d1d1d;">Janzé</span>
<span class="t" style="font-size:14.42px;font-weight:400;color:#1d1d1d;letter-spacing:-0.300px;left:708.4px;top:647.80px;-webkit-text-stroke:0.22px #1d1d1d;">9573-P016</span>
<span class="t" style="font-size:14.42px;font-weight:400;color:#1d1d1d;letter-spacing:-0.412px;left:989.4px;top:647.80px;-webkit-text-stroke:0.22px #1d1d1d;">Garage</span>
<span class="t" style="font-size:14.42px;font-weight:400;color:#1d1d1d;letter-spacing:-0.412px;left:1079.5px;top:647.80px;-webkit-text-stroke:0.22px #1d1d1d;">Garage</span>
<span class="t" style="font-size:14.42px;font-weight:400;color:#1d1d1d;right:506.80px;top:647.80px;-webkit-text-stroke:0.22px #1d1d1d;">16</span>
<svg style="left:433px;top:691.78px" width="18" height="10" viewBox="0 0 18 10"><path d="M6.9 1.45 H4.9 A3.4 3.4 0 0 0 4.9 8.25 H6.9 M9.96 1.45 H12.3 A3.4 3.4 0 0 1 12.3 8.25 H9.96 M4.3 4.85 H13" fill="none" stroke="#252525" stroke-width="1.4"/></svg>
<span class="t" style="font-size:14.42px;font-weight:400;color:#1d1d1d;letter-spacing:-0.914px;left:461.2px;top:687.17px;-webkit-text-stroke:0.22px #1d1d1d;">L&#x27;HERMITAGE</span>
<span class="t" style="font-size:14.42px;font-weight:400;color:#1d1d1d;letter-spacing:-0.313px;left:613.2px;top:687.17px;-webkit-text-stroke:0.22px #1d1d1d;">Janzé</span>
<span class="t" style="font-size:14.42px;font-weight:400;color:#1d1d1d;letter-spacing:-0.338px;left:708.4px;top:687.17px;-webkit-text-stroke:0.22px #1d1d1d;">9573-P017</span>
<span class="t" style="font-size:14.42px;font-weight:400;color:#1d1d1d;letter-spacing:-0.412px;left:989.4px;top:687.17px;-webkit-text-stroke:0.22px #1d1d1d;">Garage</span>
<span class="t" style="font-size:14.42px;font-weight:400;color:#1d1d1d;letter-spacing:-0.412px;left:1079.5px;top:687.17px;-webkit-text-stroke:0.22px #1d1d1d;">Garage</span>
<span class="t" style="font-size:14.42px;font-weight:400;color:#1d1d1d;right:506.80px;top:687.17px;-webkit-text-stroke:0.22px #1d1d1d;">17</span>
<div class="b" style="left:425px;top:705.5px;width:808px;height:8.4px;background:#c1c3c6;border-radius:4.2px;"></div>
<div class="b" style="left:425px;top:713.9px;width:1071px;height:2px;background:#f5f5f5;"></div>
<div class="b" style="left:1487.2px;top:245.2px;width:8.4px;height:383px;background:#c1c3c6;border-radius:4.2px;"></div>
<div class="b" style="left:921.6px;top:735.3px;width:475px;height:57.5px;background:#f5f5f5;border-radius:9px;"></div>
<svg style="left:941.4px;top:754.4px" width="19" height="19" viewBox="0 0 19 19"><circle cx="9.5" cy="9.5" r="8.6" fill="none" stroke="#a3a3a3" stroke-width="1.45"/><rect x="8.8" y="8.2" width="1.4" height="5.6" fill="#a3a3a3"/><rect x="8.8" y="5.2" width="1.4" height="1.6" fill="#a3a3a3"/></svg>
<span class="t" style="font-size:16.54px;font-weight:400;color:#ababab;letter-spacing:0.077px;left:971.3px;top:754.20px;">Attention, vous allez ajouter un lot à un dossier de vente</span>
<div class="b" style="left:1405px;top:745.9px;width:91px;height:36.1px;background:#47a897;border-radius:4px;"></div>
<span class="t" style="font-size:16.54px;font-weight:400;color:#fff;letter-spacing:0.335px;left:1423.4px;top:752.90px;-webkit-text-stroke:0.55px #fff;">Ajouter</span>
<div class="b" style="left:1397px;top:737.1px;width:106.2px;height:52.9px;border:4px solid #e3161b;"></div>
</div>
</body></html>
